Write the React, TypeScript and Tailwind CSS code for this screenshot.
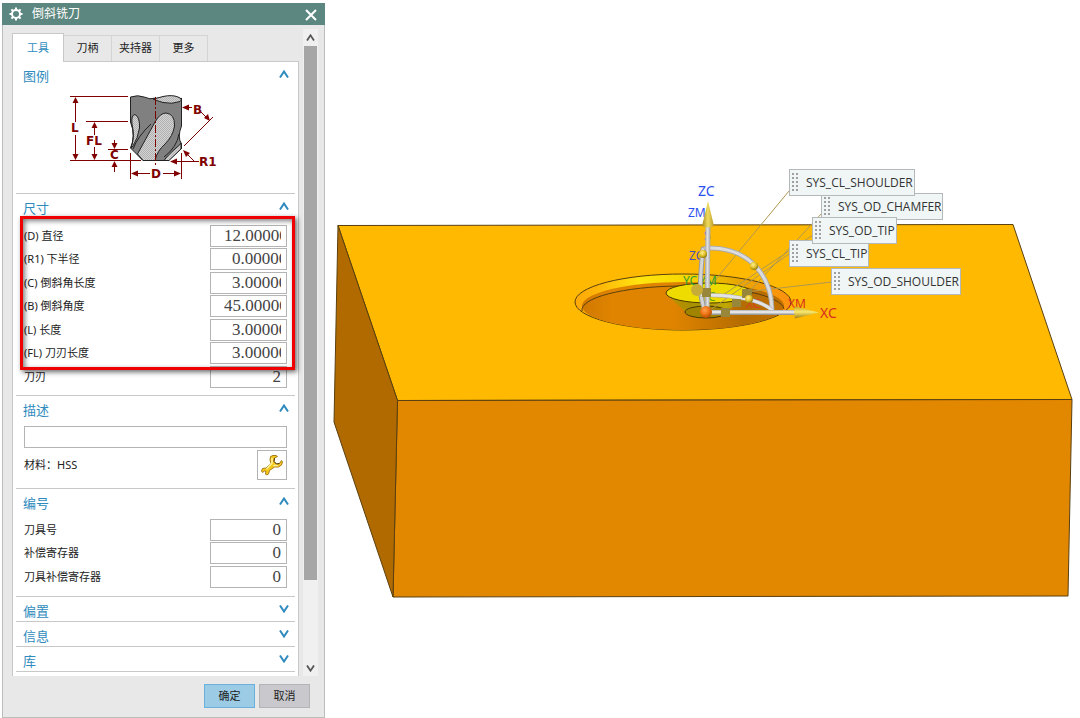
import React from 'react';

const tabs = ['工具', '刀柄', '夹持器', '更多'];

const sizes = [
  { id: 'd', label: '(D) 直径', value: '12.00000', pad: 'pl-[13px]' },
  { id: 'r1', label: '(R1) 下半径', value: '0.00000', pad: 'pl-[21px]' },
  { id: 'c', label: '(C) 倒斜角长度', value: '3.00000', pad: 'pl-[21px]' },
  { id: 'b', label: '(B) 倒斜角度', value: '45.00000', pad: 'pl-[13px]' },
  { id: 'l', label: '(L) 长度', value: '3.00000', pad: 'pl-[21px]' },
  { id: 'fl', label: '(FL) 刀刃长度', value: '3.00000', pad: 'pl-[21px]' },
  { id: 'flutes', label: '刀刃', value: '2', pad: 'text-right' },
];

const numbers = [
  { id: 'tool-no', label: '刀具号', value: '0', pad: 'text-right' },
  { id: 'adjust', label: '补偿寄存器', value: '0', pad: 'text-right' },
  { id: 'cutcom', label: '刀具补偿寄存器', value: '0', pad: 'text-right' },
];

const tags = [
  { name: 'SYS_OD_SHOULDER', place: 'left-[506px] top-[268px]' },
  { name: 'SYS_CL_TIP', place: 'left-[464px] top-[240px]' },
  { name: 'SYS_OD_CHAMFER', place: 'left-[496px] top-[193px]' },
  { name: 'SYS_OD_TIP', place: 'left-[487px] top-[217px]' },
  { name: 'SYS_CL_SHOULDER', place: 'left-[464px] top-[169px]' },
];

type FieldProps = { id: string; label: string; value: string; pad: string };

function Field({ id, label, value, pad }: FieldProps) {
  return (
    <div className="flex justify-between odd:h-[23px] even:h-[24px]">
      <label htmlFor={id} className="leading-[22px]">
        {label}
      </label>
      <input
        id={id}
        defaultValue={value}
        className={`h-[22px] w-[77px] border border-[#b4b4b4] bg-white pr-[5px] font-['Liberation_Serif',serif] text-[17px] leading-5 text-[#444] outline-none ${pad}`}
      />
    </div>
  );
}

function Arrow({ up, className = '' }: { up?: boolean; className?: string }) {
  return (
    <svg viewBox="0 0 10 8" className={className}>
      <path
        d={up ? 'M1 7.500L5 1.500L9 7.500' : 'M1 0.500L5 6.500L9 0.500'}
        fill="none"
        stroke="currentColor"
        strokeWidth="2"
      />
    </svg>
  );
}

type SectionProps = {
  title: string;
  open?: boolean;
  className?: string;
  children?: React.ReactNode;
};

function Section({ title, open, className = '', children }: SectionProps) {
  return (
    <section
      className={`relative mx-[3px] border-b border-[#c8c8c8] ${className}`}
    >
      <button
        type="button"
        aria-expanded={!!open}
        className="flex h-6 w-full items-center justify-between pr-[6px] pl-[7px] pt-1 text-[13px] leading-5 text-[#2f8bbd]"
      >
        {title}
        <Arrow up={open} className="mb-1 h-2 w-[10px]" />
      </button>
      {children}
    </section>
  );
}

function CutterDrawing() {
  return (
    <svg viewBox="16 86 279 107" className="block h-[107px] w-full">
      <defs>
        <pattern id="dots" width="2" height="2" patternUnits="userSpaceOnUse">
          <rect width="2" height="2" fill="#d4d4d4" />
          <rect width="1" height="1" fill="#b0b0b0" />
          <rect x="1" y="1" width="1" height="1" fill="#b0b0b0" />
        </pattern>
      </defs>
      <path
        d="M130.500 97 Q138 94.500 144 97 Q150 100 156 98 Q170 94 181.500 98 V126 Q177 137 181.500 144 V149 L169 160.500 H143 L130.500 148 Q136 136 130.500 122 Z"
        fill="#808080"
      />
      <path d="M153 99 Q158 98 163 96.500 Q172 94.500 178 97 Q183 99 180 101.500 Q172 104.500 163 102.500 Q158 101 153 99Z" fill="url(#dots)" stroke="#222" />
      <path d="M132 124 Q131 115 135 114.500 Q140 117 139.500 128 Q138 138 133 146 L131 148 Q135 137 132 124Z" fill="url(#dots)" stroke="#222" />
      <path d="M143 160.500 L137.500 154 L155 122 Q160 113 166 113 Q175 114 174.500 126 Q173 136 165 144 Q157 151 155 160.500Z" fill="url(#dots)" stroke="#222" />
      <path d="M164 160.500 Q167 156 176 148 Q180 145 181 143 V149 L169 160.500Z" fill="url(#dots)" stroke="#222" />
      <path d="M133 149 Q138 136 151 124 M179 134 Q177 147 164 157" fill="none" stroke="#222" />
      <path
        d="M130.500 122 V97 Q138 94.500 144 97 Q150 100 156 98 M181.500 98 V126 Q177 137 181.500 144 V149 M169 160.500 H143 L130.500 148 Q136 136 130.500 122"
        fill="none"
        stroke="#222"
      />
      <path d="M155.500 97 V165" stroke="#800000" strokeDasharray="8 2 2 2" />
      <path
        d="M70 96.500 H128 M86 121.500 H128 M108 149.500 H128 M70 160.500 H141 M75.500 98 V122 M75.500 135 V159 M94.500 123 V135 M94.500 147 V159 M114.500 140 V148 M114.500 162 V172 M130.500 153 V179 M181.500 153 V179 M132 173.500 H150 M163 173.500 H180 M183 107.500 H192 M201 112 L208 119 M213 117 L184 146 M172 161.500 H199 M184 151 L194 161"
        stroke="#800000"
        fill="none"
      />
      <path
        d="M75.500 97l-3 6h6zM75.500 160l-3-6h6zM94.500 122l-3 6h6zM94.500 160l-3-6h6zM114.500 149l-3-6h6zM114.500 161l-3 6h6zM131 173.500l7-3v6zM181 173.500l-7-3v6zM182 107.500l7-3v6zM210 121l-6-3 4-4zM170 161.500l7-3v6zM183 150l7 3-4 4z"
        fill="#800000"
      />
      <g
        fill="#800000"
        className="font-['DejaVu_Sans',sans-serif] text-[12px] font-bold"
      >
        <text x="71" y="132">L</text>
        <text x="86" y="145">FL</text>
        <text x="110" y="159">C</text>
        <text x="151" y="178">D</text>
        <text x="193" y="114">B</text>
        <text x="199" y="166">R1</text>
      </g>
    </svg>
  );
}

function Wrench() {
  return (
    <svg viewBox="0 0 24 24" className="size-6">
      <path
        d="M10.500 3.500 L13 2.500 L16 2.500 L17.500 3.500 L14.500 5 L14 8.500 L16.500 11 L19.500 10.500 L21.500 7.500 L22.500 9 L21.500 12 L18.500 14 L14.500 14 L9.500 17.500 L8.500 21 L6.500 22 L5.500 21 L6 18.500 L4.500 18 L2.500 19.500 L1.500 18 L2.500 15.500 L6 15 L11 10.500 L10 7Z"
        fill="#f4c81c"
        stroke="#a87c18"
        strokeLinejoin="round"
      />
      <path d="M12 5 L12 10 L6.500 16 M18 12.500 L13.500 12.500" stroke="#fff3a0" strokeWidth="1.500" fill="none" />
      <path d="M14.500 5 L14 8.500 L16.500 11 L19.500 10.500" stroke="#554010" fill="none" />
    </svg>
  );
}

function ToolDialog() {
  return (
    <div className="mt-[3px] ml-[2px] w-[323px] shrink-0 border border-[#bcbcbc] bg-[#e8e8e8] text-[11px] text-[#222]">
      <header className="-mx-px -mt-px flex h-[22px] items-center bg-[#5c8780] pr-2 pl-[7px] text-white">
        <svg viewBox="0 0 14 14" className="size-[14px]">
          <circle cx="7" cy="7" r="4" fill="none" stroke="#fff" strokeWidth="2" />
          <path
            d="M7 0.500V3M7 11v2.500M0.500 7H3M11 7h2.500M2.400 2.400l1.600 1.600M10 10l1.600 1.600M2.400 11.600L4 10M10 4l1.600-1.600"
            stroke="#fff"
            strokeWidth="2"
          />
        </svg>
        <h1 className="ml-[9px] flex-1 text-xs">倒斜铣刀</h1>
        <button type="button" aria-label="关闭" className="pt-[2px]">
          <svg viewBox="0 0 12 12" className="size-3">
            <path d="M1 1L11 11M11 1L1 11" stroke="#fff" strokeWidth="2" />
          </svg>
        </button>
      </header>

      <div className="mt-1 flex pr-[6px] pl-[9px]">
        <div className="w-[287px]">
          <nav className="mt-1 flex items-end">
            {tabs.map((tab, i) => (
              <button
                key={tab}
                type="button"
                className={
                  i === 0
                    ? 'relative z-10 -mb-px h-[29px] w-[52px] border border-b-0 border-[#c8c8c8] bg-white text-[#2f8bbd]'
                    : 'h-[26px] w-[48px] border border-b-0 border-l-0 border-[#d4d4d4]'
                }
              >
                {tab}
              </button>
            ))}
          </nav>
          <div className="border-x border-t border-[#c8c8c8] bg-white pb-1">
            <Section title="图例" open>
              <CutterDrawing />
            </Section>
            <Section title="尺寸" open className="pb-[6px]">
              <div className="mt-[7px] px-2">
                {sizes.map((f) => (
                  <Field key={f.id} {...f} />
                ))}
              </div>
              {/* highlight frame round the geometry values */}
              <div className="pointer-events-none absolute top-[22px] right-0 left-1 h-[154px] border-[3px] border-[#f00000] shadow-[2px_2px_5px_rgba(0,0,0,0.6),inset_2px_2px_5px_rgba(0,0,0,0.5)]" />
            </Section>
            <Section title="描述" open className="pb-2">
              <div className="mt-[6px] px-2">
                <input
                  aria-label="描述"
                  className="block h-[22px] w-full border border-[#b4b4b4] px-1 outline-none"
                />
                <div className="mt-[2px] flex items-center justify-between">
                  <span>材料：HSS</span>
                  <button
                    type="button"
                    aria-label="材料"
                    className="flex size-[30px] items-center justify-center border border-[#b4b4b4]"
                  >
                    <Wrench />
                  </button>
                </div>
              </div>
            </Section>
            <Section title="编号" open className="pb-[7px]">
              <div className="mt-[6px] px-2">
                {numbers.map((f) => (
                  <Field key={f.id} {...f} />
                ))}
              </div>
            </Section>
            <Section title="偏置" />
            <Section title="信息" />
            <Section title="库" />
          </div>
        </div>
        <div className="ml-1 flex w-[15px] flex-col items-center bg-[#f0f0f0] text-[#555]">
          <Arrow up className="my-[5px] h-[7px] w-[9px]" />
          <div className="h-[534px] w-[13px] bg-[#a6a6a6]" />
          <Arrow className="mt-auto mb-1 h-[7px] w-[9px]" />
        </div>
      </div>

      <footer className="flex justify-end gap-1 pt-2 pr-[14px] pb-[9px]">
        <button
          type="button"
          className="h-6 w-[51px] border border-[#6ab0dc] bg-[#9bcbe5]"
        >
          确定
        </button>
        <button
          type="button"
          className="h-6 w-[51px] border border-[#b4b4b8] bg-[#c8c8cd]"
        >
          取消
        </button>
      </footer>
    </div>
  );
}

function Model() {
  return (
    <svg viewBox="325 0 755 718" className="block h-[718px] w-[755px]">
      <defs>
        <linearGradient id="floor" x1="0" x2="1">
          <stop offset="0" stopColor="#d07800" />
          <stop offset="0.150" stopColor="#e08400" />
          <stop offset="0.450" stopColor="#e08400" />
          <stop offset="0.800" stopColor="#b46c00" />
          <stop offset="1" stopColor="#c07000" />
        </linearGradient>
        <linearGradient id="rim" x1="0" x2="1">
          <stop offset="0" stopColor="#ffa808" />
          <stop offset="0.120" stopColor="#ffb808" />
          <stop offset="0.300" stopColor="#ffe410" />
          <stop offset="0.500" stopColor="#f8d800" />
          <stop offset="0.750" stopColor="#e8a800" />
          <stop offset="1" stopColor="#ff9010" />
        </linearGradient>
        <linearGradient id="cone" x1="0" x2="1">
          <stop offset="0" stopColor="#c09000" />
          <stop offset="0.300" stopColor="#a89000" />
          <stop offset="0.700" stopColor="#c0a800" />
          <stop offset="1" stopColor="#b07000" />
        </linearGradient>
        <linearGradient id="rod" x1="0" x2="1">
          <stop offset="0" stopColor="#989898" />
          <stop offset="0.500" stopColor="#e0e0e0" />
          <stop offset="1" stopColor="#a0a0a0" />
        </linearGradient>
        <linearGradient id="gold" x1="0" x2="1">
          <stop offset="0" stopColor="#a88c18" />
          <stop offset="0.500" stopColor="#f0dc60" />
          <stop offset="1" stopColor="#b89820" />
        </linearGradient>
        <linearGradient id="goldX" x1="0" x2="0" y1="0" y2="1">
          <stop offset="0" stopColor="#c8a820" />
          <stop offset="0.450" stopColor="#f8e870" />
          <stop offset="1" stopColor="#a08010" />
        </linearGradient>
        <radialGradient id="ball" cx="0.400" cy="0.350" r="0.650">
          <stop offset="0" stopColor="#ffa050" />
          <stop offset="0.500" stopColor="#f07818" />
          <stop offset="1" stopColor="#b84c00" />
        </radialGradient>
        <radialGradient id="knob" cx="0.400" cy="0.350" r="0.650">
          <stop offset="0" stopColor="#fff090" />
          <stop offset="0.600" stopColor="#e0c028" />
          <stop offset="1" stopColor="#907810" />
        </radialGradient>
      </defs>

      {/* block */}
      <g stroke="#5a4010" strokeWidth="1" strokeLinejoin="round">
        <path d="M338 225.500 L1013 224.500 L1072 399.500 L397.500 400.500Z" fill="#ffb900" />
        <path d="M397.500 400.500 L1072 399.500 L1068 596 L393 597Z" fill="#e18700" />
        <path d="M338 225.500 L397.500 400.500 L393 597 L334 422Z" fill="#b06a00" />
      </g>

      {/* pocket */}
      <ellipse cx="683" cy="302" rx="108" ry="28" fill="url(#rim)" stroke="#5a4010" />
      <ellipse cx="683" cy="306" rx="101" ry="24" fill="url(#floor)" />
      <path d="M582 311 A101 24 0 0 1 784 309" fill="none" stroke="#5a4010" />

      {/* cutter */}
      <path d="M666 294 L687 313 Q704 321 724 313 L752 294Z" fill="url(#cone)" />
      <ellipse cx="706" cy="312" rx="21" ry="6" fill="#a08400" stroke="#4a3a00" />
      <ellipse cx="709" cy="293" rx="43" ry="10" fill="#eedc00" stroke="#4a3a00" />

      {/* leaders */}
      <path
        d="M789 191 L707 290 M822 213 L747 294 M813 235 L720 297 M789 254 L706 313 M832 282 L745 292"
        stroke="#b09850"
        fill="none"
      />

      <g className="font-['Noto_Sans',sans-serif] text-[12px]">
        <text x="688" y="217" fill="#2c50f0">ZM</text>
        <text x="689" y="260" fill="#5050b0">ZC</text>
        <text x="704" y="240" fill="#5050b0">S</text>
        <text x="683" y="285" fill="#30a030">YC</text>
        <text x="699" y="285" fill="#30a030">YM</text>
        <text x="708" y="301" fill="#68a818">C</text>
        <text x="746" y="308" fill="#d84020">XC</text>
        <text x="788" y="308" fill="#d83020">XM</text>
      </g>

      {/* handles */}
      <g fill="none" strokeLinecap="round">
        <path d="M703 249 C700 280 698 295 706 313" stroke="#999" strokeWidth="5" />
        <path d="M703 249 C700 280 698 295 706 313" stroke="#d4d4d4" strokeWidth="3" />
        <path d="M706 248 C748 246 771 275 772 309" stroke="#aaa" strokeWidth="5" />
        <path d="M706 248 C748 246 771 275 772 309" stroke="#dcdcdc" strokeWidth="3" />
        <path d="M702 295 C730 295 758 298 772 310" stroke="#aaa" strokeWidth="4" />
        <path d="M702 295 C730 295 758 298 772 310" stroke="#e4e4e4" strokeWidth="3" />
        <path d="M706 312.500 H796" stroke="#999" strokeWidth="5" />
        <path d="M706 312 H796" stroke="#e4e4e4" strokeWidth="3" />
      </g>
      <path d="M705.500 225 h5 l-1 86 h-5z" fill="url(#rod)" />
      <path d="M708 201 L714 226 Q708 229 702 226Z" fill="url(#gold)" />
      <path d="M819 312.500 L795 306.500 Q793 312 795 318.500Z" fill="url(#goldX)" />
      <path
        d="M702 288h9v9h-9zM742 289h10v9h-10zM732 299h9v8h-9zM721 308h9v9h-9z"
        fill="#98863a"
      />
      <circle cx="697" cy="290" r="6" fill="#c8ac38" />
      <circle cx="703" cy="254" r="4" fill="url(#knob)" />
      <circle cx="754" cy="266" r="4" fill="url(#knob)" />
      <circle cx="749" cy="299" r="4" fill="url(#knob)" />
      <circle cx="706" cy="312" r="6" fill="url(#ball)" />

      <g className="font-['Noto_Sans',sans-serif] text-[14px]">
        <text x="698" y="196" fill="#2c50f0">ZC</text>
        <text x="820" y="318" fill="#d83020">XC</text>
      </g>
    </svg>
  );
}

export default function App() {
  return (
    <main className="flex min-h-screen items-start overflow-hidden bg-white font-['Noto_Sans','Noto_Sans_CJK_SC',sans-serif]">
      <ToolDialog />
      <div className="relative min-w-0 flex-1 overflow-hidden">
        <Model />
        {tags.map((tag) => (
          <div
            key={tag.name}
            className={`absolute flex h-[27px] items-center border border-[#b4b8b8] bg-[#f0f6f6] px-px font-['Open_Sans',sans-serif] text-xs text-[#333] ${tag.place}`}
          >
            <svg viewBox="0 0 6 20" className="mr-2 ml-px h-5 w-[6px]">
              <path
                d="M1 0V20M5 0V20"
                stroke="#a0a0a0"
                strokeWidth="2"
                strokeDasharray="2 2"
              />
            </svg>
            {tag.name}
          </div>
        ))}
      </div>
    </main>
  );
}
